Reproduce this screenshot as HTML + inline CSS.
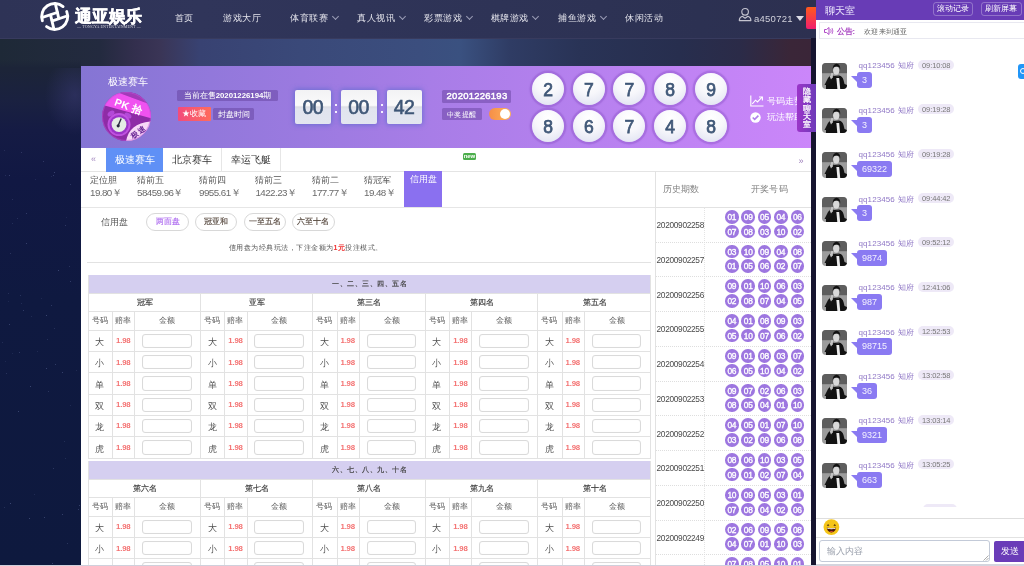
<!DOCTYPE html><html><head><meta charset="utf-8"><style>
*{box-sizing:border-box;margin:0;padding:0}
html,body{width:1024px;height:566px;overflow:hidden}
#wrap{position:absolute;left:0;top:0;width:1024px;height:566px;overflow:hidden;will-change:transform}
body{position:relative;font-family:"Liberation Sans",sans-serif;background:#0f1a45;color:#333}
.a{position:absolute}
.nw{white-space:nowrap}
#bg{left:0;top:0;width:1024px;height:566px;
 background:
  radial-gradient(ellipse 30px 40px at 75px 95px, rgba(60,60,120,.5), rgba(60,60,120,0) 100%),
  linear-gradient(180deg,#1d2536 0px,#1c2438 70px,#1a2140 100px,#151b44 130px,#111843 180px,#0f1940 300px,#0e193e 566px);}
#strip{left:0;top:38px;width:1024px;height:30px;background:linear-gradient(90deg,#1e2937 0px,#232a3f 100px,#332f4e 135px,#3a3556 160px,#384272 200px,#3a4979 300px,#3b4e7e 420px,#3a5180 460px,#2f3c64 510px,#293356 580px,#272e4e 680px,#2b2b48 740px,#3a2638 790px,#3a2538 816px)}
#strip:after{content:"";position:absolute;left:0;top:22px;width:81px;height:8px;background:linear-gradient(180deg,rgba(29,37,54,0),#1c2438)}
#nav{left:0;top:0;width:1024px;height:38.5px;background:linear-gradient(90deg,#2e3356 0px,#30355a 200px,#2e3356 500px,#2c3152 700px,#2d3050 820px);border-bottom:1px solid #383b5e}
.ni{top:12px;letter-spacing:0.5px;font-size:9.4px;color:#e4e4ec;line-height:12px}
.chev{top:13.5px;width:5px;height:5px;border-right:1px solid #9a9cb5;border-bottom:1px solid #9a9cb5;transform:rotate(45deg)}

#panel{left:81px;top:66px;width:730.5px;height:500px;background:#fff;overflow:hidden}
#hdr{left:0;top:0;width:731px;height:81.6px;background:linear-gradient(90deg,#8575d4 0%,#a87de7 48%,#cb86fa 100%)}
.lbl{background:rgba(95,60,150,.45);color:#fff;font-size:7.6px;line-height:11px;text-align:center;border-radius:1.5px}
.tbox{width:35.5px;height:33.5px;border-radius:2px;background:linear-gradient(180deg,#f2f2f4 0%,#fafafb 45%,#dcdde3 50%,#e1e4ee 56%,#e3e6f0 100%);box-shadow:0 0 5px 1px rgba(70,100,200,.55);color:#3e5676;font-size:19.5px;font-weight:normal;-webkit-text-stroke:0.6px #3e5676;line-height:34.5px;text-align:center;letter-spacing:-0.6px;text-indent:-0.6px}
.colon{color:#f4f0ff;font-size:12px;font-weight:bold;line-height:12px}
.ball{width:32px;height:32px;border-radius:50%;background:radial-gradient(circle at 50% 25%,#ffffff 0%,#f7f7fb 45%,#dcdff0 100%);box-shadow:0 0 1px 2.5px rgba(145,90,205,.5);color:#405878;font-size:17.5px;font-weight:normal;-webkit-text-stroke:0.75px #405878;line-height:34px;text-align:center}

.tab{top:82px;height:23.5px;font-size:10px;line-height:23px;text-align:center;color:#333;border-right:1px solid #e6e6e6}
.odl{top:108.6px;font-size:9px;line-height:10px;color:#555}
.odv{top:120.8px;font-size:9.8px;line-height:12px;color:#6a6a6a;letter-spacing:-0.55px}
.pill{top:147px;height:17.5px;border:1px solid #d8d8d8;border-radius:9px;font-size:8px;line-height:16.5px;text-align:center;color:#555;-webkit-text-stroke:0.15px currentColor}

.lav{background:#d5cff0;height:18.3px;font-size:7px;line-height:18.6px;text-align:center;color:#444;-webkit-text-stroke:0.2px #444;letter-spacing:0.5px;text-indent:1.5px}
.hl{height:1px;background:#e2e2e2}
.vl{width:1px;background:#e2e2e2}
.gn{font-size:8px;line-height:10px;color:#3c3c3c;text-align:center;-webkit-text-stroke:0.15px #3c3c3c}
.ch{font-size:7.5px;line-height:10px;color:#585858;text-align:center}
.dk{font-size:9px;line-height:12px;color:#505050;text-align:center}
.od{font-size:7.8px;line-height:10px;color:#f47272;font-weight:bold;text-align:center;letter-spacing:-0.2px}
.inp{width:49.5px;height:14.5px;border:1px solid #dadada;border-radius:3px;background:#fff;box-shadow:inset 0 0 1px #eee}

.hb{width:13.6px;height:13.6px;border-radius:50%;background:#9d76e0;color:#fff;font-size:8.4px;font-weight:normal;-webkit-text-stroke:0.35px #fff;line-height:15px;text-align:center;letter-spacing:-0.2px}
.pd{font-size:8.3px;line-height:10px;color:#4a4a4a;letter-spacing:-0.3px}

#stripe{left:811px;top:38px;width:5px;height:528px;background:#16142f}
#chat{left:816px;top:0;width:208px;height:566px;background:#fff;overflow:hidden}
#chdr{left:0;top:0;width:208px;height:19.7px;background:#683cb6}
.cbtn{top:2px;height:14px;border:1px solid rgba(255,255,255,.28);border-radius:3px;color:#fff;font-size:7.5px;line-height:12px;text-align:center}
.av{left:5.7px;width:25.7px;height:25.5px;border-radius:4px;overflow:hidden}
.un{left:42.5px;font-size:8px;line-height:10px;color:#9078c6;letter-spacing:0.1px}
.tm{left:102px;height:10px;border-radius:5px;background:#eee9f7;color:#777;font-size:7.5px;line-height:11px;padding:0 4px;letter-spacing:-0.1px}
.bub{left:40.7px;height:16.2px;border-radius:3px;background:#8a7af2;color:#f4f2ff;font-size:9px;line-height:16.2px;padding:0 5.3px;letter-spacing:0}
.tail{left:35.3px;width:0;height:0;border-bottom:6.5px solid transparent;border-right:6px solid #8a7af2}
</style></head><body><div id="wrap"><div id="bg" class="a"></div><div id="strip" class="a"></div><div class="a" style="left:0;top:0;width:1px;height:1px;box-shadow:26px 213px 0 0 rgba(150,165,220,0.24),6px 373px 0 0 rgba(150,165,220,0.18),5px 361px 0 0 rgba(150,165,220,0.11),35px 179px 0 0 rgba(150,165,220,0.13),34px 494px 0 0 rgba(150,165,220,0.13),18px 411px 0 0 rgba(150,165,220,0.30),46px 315px 0 0 rgba(150,165,220,0.31),4px 507px 0 0 rgba(150,165,220,0.17),12px 199px 0 0 rgba(150,165,220,0.17),65px 225px 0 0 rgba(150,165,220,0.22),51px 305px 0 0 rgba(150,165,220,0.22),5px 175px 0 0 rgba(150,165,220,0.15),54px 328px 0 0 rgba(150,165,220,0.17),47px 339px 0 0 rgba(150,165,220,0.17),64px 441px 0 0 rgba(150,165,220,0.15),46px 368px 0 0 rgba(150,165,220,0.29),58px 270px 0 0 rgba(150,165,220,0.31),9px 324px 0 0 rgba(150,165,220,0.27),12px 353px 0 0 rgba(150,165,220,0.11),53px 468px 0 0 rgba(150,165,220,0.22),70px 281px 0 0 rgba(150,165,220,0.25),48px 391px 0 0 rgba(150,165,220,0.20),67px 543px 0 0 rgba(150,165,220,0.20),53px 175px 0 0 rgba(150,165,220,0.25),52px 563px 0 0 rgba(150,165,220,0.28),23px 310px 0 0 rgba(150,165,220,0.24),2px 342px 0 0 rgba(150,165,220,0.14),9px 175px 0 0 rgba(150,165,220,0.27),10px 253px 0 0 rgba(150,165,220,0.19),70px 184px 0 0 rgba(150,165,220,0.20),44px 517px 0 0 rgba(150,165,220,0.28),69px 266px 0 0 rgba(150,165,220,0.19),29px 518px 0 0 rgba(150,165,220,0.31),12px 223px 0 0 rgba(150,165,220,0.15),19px 352px 0 0 rgba(150,165,220,0.23),21px 152px 0 0 rgba(150,165,220,0.20),30px 386px 0 0 rgba(150,165,220,0.31),55px 364px 0 0 rgba(150,165,220,0.24),54px 172px 0 0 rgba(150,165,220,0.29),62px 514px 0 0 rgba(150,165,220,0.27),31px 316px 0 0 rgba(150,165,220,0.13),51px 176px 0 0 rgba(150,165,220,0.12),17px 218px 0 0 rgba(150,165,220,0.17),4px 150px 0 0 rgba(150,165,220,0.14),8px 301px 0 0 rgba(150,165,220,0.11),70px 405px 0 0 rgba(150,165,220,0.13),20px 295px 0 0 rgba(150,165,220,0.18),10px 503px 0 0 rgba(150,165,220,0.32),37px 351px 0 0 rgba(150,165,220,0.13),8px 293px 0 0 rgba(150,165,220,0.16),66px 217px 0 0 rgba(150,165,220,0.11),76px 370px 0 0 rgba(150,165,220,0.13),43px 161px 0 0 rgba(150,165,220,0.22),78px 509px 0 0 rgba(150,165,220,0.25),21px 303px 0 0 rgba(150,165,220,0.14),62px 372px 0 0 rgba(150,165,220,0.27),26px 243px 0 0 rgba(150,165,220,0.27),79px 505px 0 0 rgba(150,165,220,0.27),65px 458px 0 0 rgba(150,165,220,0.15),41px 298px 0 0 rgba(150,165,220,0.11)"></div>
<div id="nav" class="a">
<svg class="a" style="left:38px;top:0" width="34" height="34" viewBox="38 0 34 34">
<g fill="none" stroke="#fff" stroke-width="2.9">
<path d="M42.41 20.73 A13 13 0 0 1 63.06 6.54" stroke-linecap="round"/>
<path d="M66.71 11.53 A13 13 0 0 1 46.57 26.65" stroke-linecap="round"/>
<path d="M42.5 17.4 L58.6 12"/>
<path d="M51 21.4 L67 16"/>
<path d="M50.3 13.8 L54 29.5"/>
<path d="M55.3 3.5 L59 19.3"/>
</g></svg>
<div class="a nw" style="left:75px;top:7px;font-size:17px;font-weight:bold;color:#fff;line-height:20px;letter-spacing:-0.2px;-webkit-text-stroke:0.5px #fff">通亚娱乐</div>
<div class="a nw" style="left:75px;top:25px;width:68px;height:4px;font-family:'Liberation Serif',serif;font-size:4px;line-height:4px;color:#d8d8e0;text-align:center;letter-spacing:0.15px">— TONGYA ENTERTAINMENT —</div>
<div class="a ni nw" style="left:174.5px">首页</div>
<div class="a ni nw" style="left:223.0px">游戏大厅</div>
<div class="a ni nw" style="left:290.2px">体育联赛</div>
<div class="a chev" style="left:332.7px"></div>
<div class="a ni nw" style="left:357.0px">真人视讯</div>
<div class="a chev" style="left:399.5px"></div>
<div class="a ni nw" style="left:424.1px">彩票游戏</div>
<div class="a chev" style="left:466.6px"></div>
<div class="a ni nw" style="left:490.5px">棋牌游戏</div>
<div class="a chev" style="left:533px"></div>
<div class="a ni nw" style="left:558.2px">捕鱼游戏</div>
<div class="a chev" style="left:600.7px"></div>
<div class="a ni nw" style="left:625.1px">休闲活动</div>
<svg class="a" style="left:738px;top:7px" width="14" height="15" viewBox="0 0 14 15"><g fill="none" stroke="#c4c4d0" stroke-width="1.15"><circle cx="7.1" cy="4.8" r="3.3"/><path d="M1.3 13.6 Q1.3 10.2 4.3 9.3 L7.1 11.2 L9.9 9.3 Q12.9 10.2 12.9 13.6 Z" stroke-linejoin="round"/></g></svg>
<div class="a nw" style="left:754px;top:13.2px;font-size:9.5px;letter-spacing:0.25px;line-height:11px;color:#d0d0da">a450721</div>
<div class="a" style="left:795.5px;top:16px;width:0;height:0;border-left:4.5px solid transparent;border-right:4.5px solid transparent;border-top:5px solid #dcdce6"></div>
<div class="a" style="left:806px;top:7px;width:14px;height:21.5px;border-radius:2px;background:linear-gradient(180deg,#ff5a1c,#f01e6e)"></div>
</div>
<div id="panel" class="a">
<div id="hdr" class="a">
<div class="a nw" style="left:26.8px;top:9.6px;font-size:9.5px;letter-spacing:0.2px;line-height:12px;color:#fff">极速赛车</div>
<svg class="a" style="left:21px;top:25.6px" width="49" height="49" viewBox="0 0 49 49">
<defs><clipPath id="cc"><circle cx="24.5" cy="24.5" r="24.5"/></clipPath></defs>
<g clip-path="url(#cc)">
<rect width="49" height="49" fill="#8e2ca6"/>
<polygon points="-2,-8 50,-8 50,13.1 -2,-6.2" fill="#a23ab8"/>
<polygon points="-2,-6.2 50,13.1 50,26.6 -2,12.1" fill="#f052f0"/>
<text x="12.5" y="17.8" font-family="Liberation Sans" font-weight="bold" font-size="10.5" fill="#fff" transform="rotate(20 26 13)" letter-spacing="0.3">PK 拾</text>
<ellipse cx="9" cy="21.5" rx="3.8" ry="2.4" fill="#b349d8" transform="rotate(-35 9 21.5)"/>
<ellipse cx="26" cy="23.5" rx="3.8" ry="2.4" fill="#b349d8" transform="rotate(35 26 23.5)"/>
<circle cx="17" cy="32.6" r="11.5" fill="#c052e0"/>
<circle cx="17" cy="32.6" r="9.6" fill="#9c34c8"/>
<circle cx="17" cy="32.6" r="7.4" fill="#e4ece4"/>
<path d="M19.2 26.5 L16.2 33.6" stroke="#2a2a40" stroke-width="1.4"/><circle cx="16.2" cy="33.8" r="1.6" fill="#2a2a40"/>
<path d="M22 50 L24.1 49 C26 38 34 30.5 48.3 29.4 L50 29 L50 50 Z" fill="#f7d8f7"/>
<text x="28" y="43" font-family="Liberation Sans" font-weight="bold" font-size="7.5" fill="#6d2a98" transform="rotate(-35 35.5 39.5)">极速</text>
</g>
<circle cx="24.5" cy="24.5" r="24" fill="none" stroke="#c455dc" stroke-width="1" opacity=".5"/>
</svg>
<div class="a lbl nw" style="left:96px;top:24px;width:101px;height:10.5px;line-height:12.5px;font-size:7.8px">当前在售<b>20201226194</b>期</div>
<div class="a nw" style="left:96.5px;top:41px;width:33px;height:13.5px;border-radius:1px;background:linear-gradient(90deg,#f24b7c,#ff6c5c);color:#fff;font-size:7.6px;line-height:14.5px;text-align:center">★收藏</div>
<div class="a lbl nw" style="left:132px;top:42px;width:41px;height:12px;line-height:13.5px">封盘时间</div>
<div class="a tbox" style="left:214.2px;top:24px">00</div>
<div class="a tbox" style="left:260px;top:24px">00</div>
<div class="a tbox" style="left:305.6px;top:24px">42</div>
<div class="a" style="left:254.2px;top:38.2px;width:2px;height:2.2px;background:#f4f0ff"></div>
<div class="a" style="left:254.2px;top:44.8px;width:2px;height:2.2px;background:#f4f0ff"></div>
<div class="a" style="left:300px;top:38.2px;width:2px;height:2.2px;background:#f4f0ff"></div>
<div class="a" style="left:300px;top:44.8px;width:2px;height:2.2px;background:#f4f0ff"></div>
<div class="a lbl nw" style="left:361px;top:24px;width:69px;height:12.5px;line-height:12.8px;font-size:9.5px;font-weight:normal;-webkit-text-stroke:0.45px #fff;letter-spacing:0.25px;text-indent:1px">20201226193</div>
<div class="a lbl nw" style="left:361px;top:41.8px;width:39.5px;height:12.7px;line-height:13.2px;font-size:7px;letter-spacing:0.4px">中奖提醒</div>
<div class="a" style="left:408.3px;top:42.2px;width:21.8px;height:12px;border-radius:6px;background:linear-gradient(90deg,#f58e48,#ffb45a)"><div class="a" style="right:1px;top:1px;width:10px;height:10px;border-radius:50%;background:#fff"></div></div>
<div class="a ball" style="left:451px;top:6.700000000000003px">2</div>
<div class="a ball" style="left:451px;top:43.7px">8</div>
<div class="a ball" style="left:491.9px;top:6.700000000000003px">7</div>
<div class="a ball" style="left:491.9px;top:43.7px">6</div>
<div class="a ball" style="left:532.3px;top:6.700000000000003px">7</div>
<div class="a ball" style="left:532.3px;top:43.7px">7</div>
<div class="a ball" style="left:573px;top:6.700000000000003px">8</div>
<div class="a ball" style="left:573px;top:43.7px">4</div>
<div class="a ball" style="left:614px;top:6.700000000000003px">9</div>
<div class="a ball" style="left:614px;top:43.7px">8</div>
<svg class="a" style="left:669px;top:28.5px" width="14" height="12" viewBox="0 0 14 12"><g fill="none" stroke="#fff" stroke-width="1.1"><path d="M0.8 0.5 V11 H13.5"/><path d="M2.3 8.8 L5.5 5.2 L7.5 7 L12 2.2"/><path d="M9 2 H12.4 V5.4"/></g></svg>
<div class="a nw" style="left:686.3px;top:29.8px;font-size:9px;line-height:11px;color:#fff">号码走势</div>
<svg class="a" style="left:669px;top:46px" width="11" height="11" viewBox="0 0 11 11"><circle cx="5.5" cy="5.5" r="5.2" fill="#fff"/><path d="M2.7 5.5 L4.7 7.4 L8.4 3.7" fill="none" stroke="#b080ec" stroke-width="1.7"/></svg>
<div class="a nw" style="left:686.3px;top:46.3px;font-size:9px;line-height:11px;color:#fff">玩法帮助</div>
</div>
<div class="a" style="left:0;top:82px;width:731px;height:24px;border-bottom:1px solid #e4e4e4"></div>
<div class="a" style="left:10px;top:88px;font-size:9px;line-height:10px;color:#a58ac0">«</div>
<div class="a tab nw" style="left:25px;width:57px;background:#5f90f6;color:#fff;border-right:none">极速赛车</div>
<div class="a tab nw" style="left:82px;width:59px">北京赛车</div>
<div class="a tab nw" style="left:141px;width:59px">幸运飞艇</div>
<div class="a nw" style="left:381.8px;top:87.3px;width:13.2px;height:6.8px;border-radius:1.5px;background:#4cae4c;color:#fff;font-size:6px;font-weight:bold;line-height:7px;text-align:center;letter-spacing:-0.2px">new</div>
<div class="a" style="left:717.5px;top:89.5px;font-size:9px;line-height:10px;color:#9a7ab8">»</div>
<div class="a odl nw" style="left:9px">定位胆</div>
<div class="a odv nw" style="left:9px">19.80￥</div>
<div class="a odl nw" style="left:56px">猜前五</div>
<div class="a odv nw" style="left:56px">58459.96￥</div>
<div class="a odl nw" style="left:118px">猜前四</div>
<div class="a odv nw" style="left:118px">9955.61￥</div>
<div class="a odl nw" style="left:174.4px">猜前三</div>
<div class="a odv nw" style="left:174.4px">1422.23￥</div>
<div class="a odl nw" style="left:231px">猜前二</div>
<div class="a odv nw" style="left:231px">177.77￥</div>
<div class="a odl nw" style="left:283px">猜冠军</div>
<div class="a odv nw" style="left:283px">19.48￥</div>
<div class="a nw" style="left:323px;top:105px;width:38px;height:35.5px;background:#8a70f0;color:#fff;font-size:9px;line-height:16px;text-align:center">信用盘</div>
<div class="a" style="left:0;top:140.5px;width:575px;height:1px;background:#e6e6e6"></div>
<div class="a nw" style="left:19.5px;top:151px;font-size:9px;line-height:10px;color:#555">信用盘</div>
<div class="a pill nw" style="left:65.4px;width:42.5px;color:#b070f0">两面盘</div>
<div class="a pill nw" style="left:113.6px;width:42.5px;color:#54463c">冠亚和</div>
<div class="a pill nw" style="left:162.5px;width:42.5px;color:#54463c">一至五名</div>
<div class="a pill nw" style="left:211px;width:42.5px;color:#54463c">六至十名</div>
<div class="a nw" style="left:147.5px;top:176.5px;font-size:7px;letter-spacing:0.5px;line-height:9px;color:#555">信用盘为经典玩法，下注金额为<b style="color:#f03030">1元</b>投注模式。</div>
<div class="a" style="left:6px;top:196px;width:563.5px;height:1px;background:#e2e2e2"></div>
<div class="a lav nw" style="left:6.7px;top:208.89999999999998px;width:563.0999999999999px">一、二、三、四、五名</div>
<div class="a vl" style="left:6.7px;top:208.89999999999998px;height:182.62px"></div>
<div class="a vl" style="left:568.8px;top:208.89999999999998px;height:182.62px"></div>
<div class="a hl" style="left:6.7px;top:227.2px;width:563.0999999999999px"></div>
<div class="a hl" style="left:6.7px;top:244.99999999999997px;width:563.0999999999999px"></div>
<div class="a hl" style="left:6.7px;top:263.9px;width:563.0999999999999px"></div>
<div class="a hl" style="left:6.7px;top:285.16999999999996px;width:563.0999999999999px"></div>
<div class="a hl" style="left:6.7px;top:306.44px;width:563.0999999999999px"></div>
<div class="a hl" style="left:6.7px;top:327.71px;width:563.0999999999999px"></div>
<div class="a hl" style="left:6.7px;top:348.97999999999996px;width:563.0999999999999px"></div>
<div class="a hl" style="left:6.7px;top:370.25px;width:563.0999999999999px"></div>
<div class="a hl" style="left:6.7px;top:391.52px;width:563.0999999999999px"></div>
<div class="a gn nw" style="left:7.7px;top:231.6px;width:112.2px">冠军</div>
<div class="a vl" style="left:31.099999999999998px;top:244.99999999999997px;height:146.52px"></div>
<div class="a vl" style="left:53.300000000000004px;top:244.99999999999997px;height:146.52px"></div>
<div class="a ch nw" style="left:6.7px;top:249.79999999999998px;width:24.4px">号码</div>
<div class="a ch nw" style="left:31.099999999999998px;top:249.79999999999998px;width:22.4px">赔率</div>
<div class="a ch nw" style="left:53.300000000000004px;top:249.79999999999998px;width:65.6px">金额</div>
<div class="a dk nw" style="left:6.7px;top:270.2px;width:24.4px">大</div>
<div class="a od nw" style="left:31.099999999999998px;top:270.4px;width:22.4px">1.98</div>
<div class="a inp" style="left:61.2px;top:267.7px"></div>
<div class="a dk nw" style="left:6.7px;top:291.46999999999997px;width:24.4px">小</div>
<div class="a od nw" style="left:31.099999999999998px;top:291.66999999999996px;width:22.4px">1.98</div>
<div class="a inp" style="left:61.2px;top:288.96999999999997px"></div>
<div class="a dk nw" style="left:6.7px;top:312.74px;width:24.4px">单</div>
<div class="a od nw" style="left:31.099999999999998px;top:312.94px;width:22.4px">1.98</div>
<div class="a inp" style="left:61.2px;top:310.24px"></div>
<div class="a dk nw" style="left:6.7px;top:334.01px;width:24.4px">双</div>
<div class="a od nw" style="left:31.099999999999998px;top:334.21px;width:22.4px">1.98</div>
<div class="a inp" style="left:61.2px;top:331.51px"></div>
<div class="a dk nw" style="left:6.7px;top:355.28px;width:24.4px">龙</div>
<div class="a od nw" style="left:31.099999999999998px;top:355.47999999999996px;width:22.4px">1.98</div>
<div class="a inp" style="left:61.2px;top:352.78px"></div>
<div class="a dk nw" style="left:6.7px;top:376.55px;width:24.4px">虎</div>
<div class="a od nw" style="left:31.099999999999998px;top:376.75px;width:22.4px">1.98</div>
<div class="a inp" style="left:61.2px;top:374.05px"></div>
<div class="a vl" style="left:118.9px;top:227.2px;height:164.32px"></div>
<div class="a gn nw" style="left:119.9px;top:231.6px;width:112.19999999999999px">亚军</div>
<div class="a vl" style="left:143.3px;top:244.99999999999997px;height:146.52px"></div>
<div class="a vl" style="left:165.5px;top:244.99999999999997px;height:146.52px"></div>
<div class="a ch nw" style="left:118.9px;top:249.79999999999998px;width:24.4px">号码</div>
<div class="a ch nw" style="left:143.3px;top:249.79999999999998px;width:22.4px">赔率</div>
<div class="a ch nw" style="left:165.5px;top:249.79999999999998px;width:65.6px">金额</div>
<div class="a dk nw" style="left:118.9px;top:270.2px;width:24.4px">大</div>
<div class="a od nw" style="left:143.3px;top:270.4px;width:22.4px">1.98</div>
<div class="a inp" style="left:173.4px;top:267.7px"></div>
<div class="a dk nw" style="left:118.9px;top:291.46999999999997px;width:24.4px">小</div>
<div class="a od nw" style="left:143.3px;top:291.66999999999996px;width:22.4px">1.98</div>
<div class="a inp" style="left:173.4px;top:288.96999999999997px"></div>
<div class="a dk nw" style="left:118.9px;top:312.74px;width:24.4px">单</div>
<div class="a od nw" style="left:143.3px;top:312.94px;width:22.4px">1.98</div>
<div class="a inp" style="left:173.4px;top:310.24px"></div>
<div class="a dk nw" style="left:118.9px;top:334.01px;width:24.4px">双</div>
<div class="a od nw" style="left:143.3px;top:334.21px;width:22.4px">1.98</div>
<div class="a inp" style="left:173.4px;top:331.51px"></div>
<div class="a dk nw" style="left:118.9px;top:355.28px;width:24.4px">龙</div>
<div class="a od nw" style="left:143.3px;top:355.47999999999996px;width:22.4px">1.98</div>
<div class="a inp" style="left:173.4px;top:352.78px"></div>
<div class="a dk nw" style="left:118.9px;top:376.55px;width:24.4px">虎</div>
<div class="a od nw" style="left:143.3px;top:376.75px;width:22.4px">1.98</div>
<div class="a inp" style="left:173.4px;top:374.05px"></div>
<div class="a vl" style="left:231.1px;top:227.2px;height:164.32px"></div>
<div class="a gn nw" style="left:232.1px;top:231.6px;width:112.70000000000002px">第三名</div>
<div class="a vl" style="left:255.5px;top:244.99999999999997px;height:146.52px"></div>
<div class="a vl" style="left:277.7px;top:244.99999999999997px;height:146.52px"></div>
<div class="a ch nw" style="left:231.1px;top:249.79999999999998px;width:24.4px">号码</div>
<div class="a ch nw" style="left:255.5px;top:249.79999999999998px;width:22.4px">赔率</div>
<div class="a ch nw" style="left:277.7px;top:249.79999999999998px;width:66.10000000000002px">金额</div>
<div class="a dk nw" style="left:231.1px;top:270.2px;width:24.4px">大</div>
<div class="a od nw" style="left:255.5px;top:270.4px;width:22.4px">1.98</div>
<div class="a inp" style="left:285.6px;top:267.7px"></div>
<div class="a dk nw" style="left:231.1px;top:291.46999999999997px;width:24.4px">小</div>
<div class="a od nw" style="left:255.5px;top:291.66999999999996px;width:22.4px">1.98</div>
<div class="a inp" style="left:285.6px;top:288.96999999999997px"></div>
<div class="a dk nw" style="left:231.1px;top:312.74px;width:24.4px">单</div>
<div class="a od nw" style="left:255.5px;top:312.94px;width:22.4px">1.98</div>
<div class="a inp" style="left:285.6px;top:310.24px"></div>
<div class="a dk nw" style="left:231.1px;top:334.01px;width:24.4px">双</div>
<div class="a od nw" style="left:255.5px;top:334.21px;width:22.4px">1.98</div>
<div class="a inp" style="left:285.6px;top:331.51px"></div>
<div class="a dk nw" style="left:231.1px;top:355.28px;width:24.4px">龙</div>
<div class="a od nw" style="left:255.5px;top:355.47999999999996px;width:22.4px">1.98</div>
<div class="a inp" style="left:285.6px;top:352.78px"></div>
<div class="a dk nw" style="left:231.1px;top:376.55px;width:24.4px">虎</div>
<div class="a od nw" style="left:255.5px;top:376.75px;width:22.4px">1.98</div>
<div class="a inp" style="left:285.6px;top:374.05px"></div>
<div class="a vl" style="left:343.8px;top:227.2px;height:164.32px"></div>
<div class="a gn nw" style="left:344.8px;top:231.6px;width:112.39999999999998px">第四名</div>
<div class="a vl" style="left:368.2px;top:244.99999999999997px;height:146.52px"></div>
<div class="a vl" style="left:390.40000000000003px;top:244.99999999999997px;height:146.52px"></div>
<div class="a ch nw" style="left:343.8px;top:249.79999999999998px;width:24.4px">号码</div>
<div class="a ch nw" style="left:368.2px;top:249.79999999999998px;width:22.4px">赔率</div>
<div class="a ch nw" style="left:390.40000000000003px;top:249.79999999999998px;width:65.79999999999998px">金额</div>
<div class="a dk nw" style="left:343.8px;top:270.2px;width:24.4px">大</div>
<div class="a od nw" style="left:368.2px;top:270.4px;width:22.4px">1.98</div>
<div class="a inp" style="left:398.3px;top:267.7px"></div>
<div class="a dk nw" style="left:343.8px;top:291.46999999999997px;width:24.4px">小</div>
<div class="a od nw" style="left:368.2px;top:291.66999999999996px;width:22.4px">1.98</div>
<div class="a inp" style="left:398.3px;top:288.96999999999997px"></div>
<div class="a dk nw" style="left:343.8px;top:312.74px;width:24.4px">单</div>
<div class="a od nw" style="left:368.2px;top:312.94px;width:22.4px">1.98</div>
<div class="a inp" style="left:398.3px;top:310.24px"></div>
<div class="a dk nw" style="left:343.8px;top:334.01px;width:24.4px">双</div>
<div class="a od nw" style="left:368.2px;top:334.21px;width:22.4px">1.98</div>
<div class="a inp" style="left:398.3px;top:331.51px"></div>
<div class="a dk nw" style="left:343.8px;top:355.28px;width:24.4px">龙</div>
<div class="a od nw" style="left:368.2px;top:355.47999999999996px;width:22.4px">1.98</div>
<div class="a inp" style="left:398.3px;top:352.78px"></div>
<div class="a dk nw" style="left:343.8px;top:376.55px;width:24.4px">虎</div>
<div class="a od nw" style="left:368.2px;top:376.75px;width:22.4px">1.98</div>
<div class="a inp" style="left:398.3px;top:374.05px"></div>
<div class="a vl" style="left:456.2px;top:227.2px;height:164.32px"></div>
<div class="a gn nw" style="left:457.2px;top:231.6px;width:113.59999999999997px">第五名</div>
<div class="a vl" style="left:480.59999999999997px;top:244.99999999999997px;height:146.52px"></div>
<div class="a vl" style="left:502.8px;top:244.99999999999997px;height:146.52px"></div>
<div class="a ch nw" style="left:456.2px;top:249.79999999999998px;width:24.4px">号码</div>
<div class="a ch nw" style="left:480.59999999999997px;top:249.79999999999998px;width:22.4px">赔率</div>
<div class="a ch nw" style="left:502.8px;top:249.79999999999998px;width:66.99999999999997px">金额</div>
<div class="a dk nw" style="left:456.2px;top:270.2px;width:24.4px">大</div>
<div class="a od nw" style="left:480.59999999999997px;top:270.4px;width:22.4px">1.98</div>
<div class="a inp" style="left:510.7px;top:267.7px"></div>
<div class="a dk nw" style="left:456.2px;top:291.46999999999997px;width:24.4px">小</div>
<div class="a od nw" style="left:480.59999999999997px;top:291.66999999999996px;width:22.4px">1.98</div>
<div class="a inp" style="left:510.7px;top:288.96999999999997px"></div>
<div class="a dk nw" style="left:456.2px;top:312.74px;width:24.4px">单</div>
<div class="a od nw" style="left:480.59999999999997px;top:312.94px;width:22.4px">1.98</div>
<div class="a inp" style="left:510.7px;top:310.24px"></div>
<div class="a dk nw" style="left:456.2px;top:334.01px;width:24.4px">双</div>
<div class="a od nw" style="left:480.59999999999997px;top:334.21px;width:22.4px">1.98</div>
<div class="a inp" style="left:510.7px;top:331.51px"></div>
<div class="a dk nw" style="left:456.2px;top:355.28px;width:24.4px">龙</div>
<div class="a od nw" style="left:480.59999999999997px;top:355.47999999999996px;width:22.4px">1.98</div>
<div class="a inp" style="left:510.7px;top:352.78px"></div>
<div class="a dk nw" style="left:456.2px;top:376.55px;width:24.4px">虎</div>
<div class="a od nw" style="left:480.59999999999997px;top:376.75px;width:22.4px">1.98</div>
<div class="a inp" style="left:510.7px;top:374.05px"></div>
<div class="a lav nw" style="left:6.7px;top:394.8px;width:563.0999999999999px">六、七、八、九、十名</div>
<div class="a vl" style="left:6.7px;top:394.8px;height:182.62000000000006px"></div>
<div class="a vl" style="left:568.8px;top:394.8px;height:182.62000000000006px"></div>
<div class="a hl" style="left:6.7px;top:413.1px;width:563.0999999999999px"></div>
<div class="a hl" style="left:6.7px;top:430.90000000000003px;width:563.0999999999999px"></div>
<div class="a hl" style="left:6.7px;top:449.8px;width:563.0999999999999px"></div>
<div class="a hl" style="left:6.7px;top:471.07px;width:563.0999999999999px"></div>
<div class="a hl" style="left:6.7px;top:492.34000000000003px;width:563.0999999999999px"></div>
<div class="a hl" style="left:6.7px;top:513.61px;width:563.0999999999999px"></div>
<div class="a hl" style="left:6.7px;top:534.88px;width:563.0999999999999px"></div>
<div class="a hl" style="left:6.7px;top:556.15px;width:563.0999999999999px"></div>
<div class="a hl" style="left:6.7px;top:577.4200000000001px;width:563.0999999999999px"></div>
<div class="a gn nw" style="left:7.7px;top:417.5px;width:112.2px">第六名</div>
<div class="a vl" style="left:31.099999999999998px;top:430.90000000000003px;height:146.52000000000004px"></div>
<div class="a vl" style="left:53.300000000000004px;top:430.90000000000003px;height:146.52000000000004px"></div>
<div class="a ch nw" style="left:6.7px;top:435.70000000000005px;width:24.4px">号码</div>
<div class="a ch nw" style="left:31.099999999999998px;top:435.70000000000005px;width:22.4px">赔率</div>
<div class="a ch nw" style="left:53.300000000000004px;top:435.70000000000005px;width:65.6px">金额</div>
<div class="a dk nw" style="left:6.7px;top:456.1px;width:24.4px">大</div>
<div class="a od nw" style="left:31.099999999999998px;top:456.3px;width:22.4px">1.98</div>
<div class="a inp" style="left:61.2px;top:453.6px"></div>
<div class="a dk nw" style="left:6.7px;top:477.37px;width:24.4px">小</div>
<div class="a od nw" style="left:31.099999999999998px;top:477.57px;width:22.4px">1.98</div>
<div class="a inp" style="left:61.2px;top:474.87px"></div>
<div class="a dk nw" style="left:6.7px;top:498.64000000000004px;width:24.4px">单</div>
<div class="a od nw" style="left:31.099999999999998px;top:498.84000000000003px;width:22.4px">1.98</div>
<div class="a inp" style="left:61.2px;top:496.14000000000004px"></div>
<div class="a dk nw" style="left:6.7px;top:519.91px;width:24.4px">双</div>
<div class="a od nw" style="left:31.099999999999998px;top:520.11px;width:22.4px">1.98</div>
<div class="a inp" style="left:61.2px;top:517.41px"></div>
<div class="a dk nw" style="left:6.7px;top:541.18px;width:24.4px">龙</div>
<div class="a od nw" style="left:31.099999999999998px;top:541.38px;width:22.4px">1.98</div>
<div class="a inp" style="left:61.2px;top:538.68px"></div>
<div class="a dk nw" style="left:6.7px;top:562.4499999999999px;width:24.4px">虎</div>
<div class="a od nw" style="left:31.099999999999998px;top:562.65px;width:22.4px">1.98</div>
<div class="a inp" style="left:61.2px;top:559.9499999999999px"></div>
<div class="a vl" style="left:118.9px;top:413.1px;height:164.32000000000005px"></div>
<div class="a gn nw" style="left:119.9px;top:417.5px;width:112.19999999999999px">第七名</div>
<div class="a vl" style="left:143.3px;top:430.90000000000003px;height:146.52000000000004px"></div>
<div class="a vl" style="left:165.5px;top:430.90000000000003px;height:146.52000000000004px"></div>
<div class="a ch nw" style="left:118.9px;top:435.70000000000005px;width:24.4px">号码</div>
<div class="a ch nw" style="left:143.3px;top:435.70000000000005px;width:22.4px">赔率</div>
<div class="a ch nw" style="left:165.5px;top:435.70000000000005px;width:65.6px">金额</div>
<div class="a dk nw" style="left:118.9px;top:456.1px;width:24.4px">大</div>
<div class="a od nw" style="left:143.3px;top:456.3px;width:22.4px">1.98</div>
<div class="a inp" style="left:173.4px;top:453.6px"></div>
<div class="a dk nw" style="left:118.9px;top:477.37px;width:24.4px">小</div>
<div class="a od nw" style="left:143.3px;top:477.57px;width:22.4px">1.98</div>
<div class="a inp" style="left:173.4px;top:474.87px"></div>
<div class="a dk nw" style="left:118.9px;top:498.64000000000004px;width:24.4px">单</div>
<div class="a od nw" style="left:143.3px;top:498.84000000000003px;width:22.4px">1.98</div>
<div class="a inp" style="left:173.4px;top:496.14000000000004px"></div>
<div class="a dk nw" style="left:118.9px;top:519.91px;width:24.4px">双</div>
<div class="a od nw" style="left:143.3px;top:520.11px;width:22.4px">1.98</div>
<div class="a inp" style="left:173.4px;top:517.41px"></div>
<div class="a dk nw" style="left:118.9px;top:541.18px;width:24.4px">龙</div>
<div class="a od nw" style="left:143.3px;top:541.38px;width:22.4px">1.98</div>
<div class="a inp" style="left:173.4px;top:538.68px"></div>
<div class="a dk nw" style="left:118.9px;top:562.4499999999999px;width:24.4px">虎</div>
<div class="a od nw" style="left:143.3px;top:562.65px;width:22.4px">1.98</div>
<div class="a inp" style="left:173.4px;top:559.9499999999999px"></div>
<div class="a vl" style="left:231.1px;top:413.1px;height:164.32000000000005px"></div>
<div class="a gn nw" style="left:232.1px;top:417.5px;width:112.70000000000002px">第八名</div>
<div class="a vl" style="left:255.5px;top:430.90000000000003px;height:146.52000000000004px"></div>
<div class="a vl" style="left:277.7px;top:430.90000000000003px;height:146.52000000000004px"></div>
<div class="a ch nw" style="left:231.1px;top:435.70000000000005px;width:24.4px">号码</div>
<div class="a ch nw" style="left:255.5px;top:435.70000000000005px;width:22.4px">赔率</div>
<div class="a ch nw" style="left:277.7px;top:435.70000000000005px;width:66.10000000000002px">金额</div>
<div class="a dk nw" style="left:231.1px;top:456.1px;width:24.4px">大</div>
<div class="a od nw" style="left:255.5px;top:456.3px;width:22.4px">1.98</div>
<div class="a inp" style="left:285.6px;top:453.6px"></div>
<div class="a dk nw" style="left:231.1px;top:477.37px;width:24.4px">小</div>
<div class="a od nw" style="left:255.5px;top:477.57px;width:22.4px">1.98</div>
<div class="a inp" style="left:285.6px;top:474.87px"></div>
<div class="a dk nw" style="left:231.1px;top:498.64000000000004px;width:24.4px">单</div>
<div class="a od nw" style="left:255.5px;top:498.84000000000003px;width:22.4px">1.98</div>
<div class="a inp" style="left:285.6px;top:496.14000000000004px"></div>
<div class="a dk nw" style="left:231.1px;top:519.91px;width:24.4px">双</div>
<div class="a od nw" style="left:255.5px;top:520.11px;width:22.4px">1.98</div>
<div class="a inp" style="left:285.6px;top:517.41px"></div>
<div class="a dk nw" style="left:231.1px;top:541.18px;width:24.4px">龙</div>
<div class="a od nw" style="left:255.5px;top:541.38px;width:22.4px">1.98</div>
<div class="a inp" style="left:285.6px;top:538.68px"></div>
<div class="a dk nw" style="left:231.1px;top:562.4499999999999px;width:24.4px">虎</div>
<div class="a od nw" style="left:255.5px;top:562.65px;width:22.4px">1.98</div>
<div class="a inp" style="left:285.6px;top:559.9499999999999px"></div>
<div class="a vl" style="left:343.8px;top:413.1px;height:164.32000000000005px"></div>
<div class="a gn nw" style="left:344.8px;top:417.5px;width:112.39999999999998px">第九名</div>
<div class="a vl" style="left:368.2px;top:430.90000000000003px;height:146.52000000000004px"></div>
<div class="a vl" style="left:390.40000000000003px;top:430.90000000000003px;height:146.52000000000004px"></div>
<div class="a ch nw" style="left:343.8px;top:435.70000000000005px;width:24.4px">号码</div>
<div class="a ch nw" style="left:368.2px;top:435.70000000000005px;width:22.4px">赔率</div>
<div class="a ch nw" style="left:390.40000000000003px;top:435.70000000000005px;width:65.79999999999998px">金额</div>
<div class="a dk nw" style="left:343.8px;top:456.1px;width:24.4px">大</div>
<div class="a od nw" style="left:368.2px;top:456.3px;width:22.4px">1.98</div>
<div class="a inp" style="left:398.3px;top:453.6px"></div>
<div class="a dk nw" style="left:343.8px;top:477.37px;width:24.4px">小</div>
<div class="a od nw" style="left:368.2px;top:477.57px;width:22.4px">1.98</div>
<div class="a inp" style="left:398.3px;top:474.87px"></div>
<div class="a dk nw" style="left:343.8px;top:498.64000000000004px;width:24.4px">单</div>
<div class="a od nw" style="left:368.2px;top:498.84000000000003px;width:22.4px">1.98</div>
<div class="a inp" style="left:398.3px;top:496.14000000000004px"></div>
<div class="a dk nw" style="left:343.8px;top:519.91px;width:24.4px">双</div>
<div class="a od nw" style="left:368.2px;top:520.11px;width:22.4px">1.98</div>
<div class="a inp" style="left:398.3px;top:517.41px"></div>
<div class="a dk nw" style="left:343.8px;top:541.18px;width:24.4px">龙</div>
<div class="a od nw" style="left:368.2px;top:541.38px;width:22.4px">1.98</div>
<div class="a inp" style="left:398.3px;top:538.68px"></div>
<div class="a dk nw" style="left:343.8px;top:562.4499999999999px;width:24.4px">虎</div>
<div class="a od nw" style="left:368.2px;top:562.65px;width:22.4px">1.98</div>
<div class="a inp" style="left:398.3px;top:559.9499999999999px"></div>
<div class="a vl" style="left:456.2px;top:413.1px;height:164.32000000000005px"></div>
<div class="a gn nw" style="left:457.2px;top:417.5px;width:113.59999999999997px">第十名</div>
<div class="a vl" style="left:480.59999999999997px;top:430.90000000000003px;height:146.52000000000004px"></div>
<div class="a vl" style="left:502.8px;top:430.90000000000003px;height:146.52000000000004px"></div>
<div class="a ch nw" style="left:456.2px;top:435.70000000000005px;width:24.4px">号码</div>
<div class="a ch nw" style="left:480.59999999999997px;top:435.70000000000005px;width:22.4px">赔率</div>
<div class="a ch nw" style="left:502.8px;top:435.70000000000005px;width:66.99999999999997px">金额</div>
<div class="a dk nw" style="left:456.2px;top:456.1px;width:24.4px">大</div>
<div class="a od nw" style="left:480.59999999999997px;top:456.3px;width:22.4px">1.98</div>
<div class="a inp" style="left:510.7px;top:453.6px"></div>
<div class="a dk nw" style="left:456.2px;top:477.37px;width:24.4px">小</div>
<div class="a od nw" style="left:480.59999999999997px;top:477.57px;width:22.4px">1.98</div>
<div class="a inp" style="left:510.7px;top:474.87px"></div>
<div class="a dk nw" style="left:456.2px;top:498.64000000000004px;width:24.4px">单</div>
<div class="a od nw" style="left:480.59999999999997px;top:498.84000000000003px;width:22.4px">1.98</div>
<div class="a inp" style="left:510.7px;top:496.14000000000004px"></div>
<div class="a dk nw" style="left:456.2px;top:519.91px;width:24.4px">双</div>
<div class="a od nw" style="left:480.59999999999997px;top:520.11px;width:22.4px">1.98</div>
<div class="a inp" style="left:510.7px;top:517.41px"></div>
<div class="a dk nw" style="left:456.2px;top:541.18px;width:24.4px">龙</div>
<div class="a od nw" style="left:480.59999999999997px;top:541.38px;width:22.4px">1.98</div>
<div class="a inp" style="left:510.7px;top:538.68px"></div>
<div class="a dk nw" style="left:456.2px;top:562.4499999999999px;width:24.4px">虎</div>
<div class="a od nw" style="left:480.59999999999997px;top:562.65px;width:22.4px">1.98</div>
<div class="a inp" style="left:510.7px;top:559.9499999999999px"></div>
<div class="a vl" style="left:574px;top:105px;height:400px"></div>
<div class="a hl" style="left:574px;top:140.5px;width:160px"></div>
<div class="a nw" style="left:581.5px;top:118.3px;font-size:8.5px;letter-spacing:0.3px;line-height:10px;color:#808080">历史期数</div>
<div class="a nw" style="left:669.7px;top:118.3px;font-size:8.5px;letter-spacing:0.3px;line-height:10px;color:#808080">开奖号码</div>
<div class="a" style="left:622.6px;top:141px;width:0;height:400px;border-left:1px dotted #e4e4e4"></div>
<div class="a pd nw" style="left:575.5px;top:154.0px">20200902258</div>
<div class="a hb" style="left:644.05px;top:143.95px">01</div>
<div class="a hb" style="left:644.05px;top:158.55px">07</div>
<div class="a hb" style="left:660.35px;top:143.95px">09</div>
<div class="a hb" style="left:660.35px;top:158.55px">08</div>
<div class="a hb" style="left:676.65px;top:143.95px">05</div>
<div class="a hb" style="left:676.65px;top:158.55px">03</div>
<div class="a hb" style="left:693.05px;top:143.95px">04</div>
<div class="a hb" style="left:693.05px;top:158.55px">10</div>
<div class="a hb" style="left:709.55px;top:143.95px">06</div>
<div class="a hb" style="left:709.55px;top:158.55px">02</div>
<div class="a" style="left:575px;top:175.5px;width:161px;height:0;border-top:1px dotted #dedede"></div>
<div class="a pd nw" style="left:575.5px;top:188.75px">20200902257</div>
<div class="a hb" style="left:644.05px;top:178.7px">03</div>
<div class="a hb" style="left:644.05px;top:193.3px">01</div>
<div class="a hb" style="left:660.35px;top:178.7px">10</div>
<div class="a hb" style="left:660.35px;top:193.3px">05</div>
<div class="a hb" style="left:676.65px;top:178.7px">09</div>
<div class="a hb" style="left:676.65px;top:193.3px">06</div>
<div class="a hb" style="left:693.05px;top:178.7px">04</div>
<div class="a hb" style="left:693.05px;top:193.3px">02</div>
<div class="a hb" style="left:709.55px;top:178.7px">08</div>
<div class="a hb" style="left:709.55px;top:193.3px">07</div>
<div class="a" style="left:575px;top:210.25px;width:161px;height:0;border-top:1px dotted #dedede"></div>
<div class="a pd nw" style="left:575.5px;top:223.5px">20200902256</div>
<div class="a hb" style="left:644.05px;top:213.45px">09</div>
<div class="a hb" style="left:644.05px;top:228.05px">02</div>
<div class="a hb" style="left:660.35px;top:213.45px">01</div>
<div class="a hb" style="left:660.35px;top:228.05px">08</div>
<div class="a hb" style="left:676.65px;top:213.45px">10</div>
<div class="a hb" style="left:676.65px;top:228.05px">07</div>
<div class="a hb" style="left:693.05px;top:213.45px">06</div>
<div class="a hb" style="left:693.05px;top:228.05px">04</div>
<div class="a hb" style="left:709.55px;top:213.45px">03</div>
<div class="a hb" style="left:709.55px;top:228.05px">05</div>
<div class="a" style="left:575px;top:245.0px;width:161px;height:0;border-top:1px dotted #dedede"></div>
<div class="a pd nw" style="left:575.5px;top:258.25px">20200902255</div>
<div class="a hb" style="left:644.05px;top:248.2px">04</div>
<div class="a hb" style="left:644.05px;top:262.8px">05</div>
<div class="a hb" style="left:660.35px;top:248.2px">01</div>
<div class="a hb" style="left:660.35px;top:262.8px">10</div>
<div class="a hb" style="left:676.65px;top:248.2px">08</div>
<div class="a hb" style="left:676.65px;top:262.8px">07</div>
<div class="a hb" style="left:693.05px;top:248.2px">09</div>
<div class="a hb" style="left:693.05px;top:262.8px">06</div>
<div class="a hb" style="left:709.55px;top:248.2px">03</div>
<div class="a hb" style="left:709.55px;top:262.8px">02</div>
<div class="a" style="left:575px;top:279.75px;width:161px;height:0;border-top:1px dotted #dedede"></div>
<div class="a pd nw" style="left:575.5px;top:293.0px">20200902254</div>
<div class="a hb" style="left:644.05px;top:282.95px">09</div>
<div class="a hb" style="left:644.05px;top:297.55px">06</div>
<div class="a hb" style="left:660.35px;top:282.95px">01</div>
<div class="a hb" style="left:660.35px;top:297.55px">05</div>
<div class="a hb" style="left:676.65px;top:282.95px">08</div>
<div class="a hb" style="left:676.65px;top:297.55px">10</div>
<div class="a hb" style="left:693.05px;top:282.95px">03</div>
<div class="a hb" style="left:693.05px;top:297.55px">04</div>
<div class="a hb" style="left:709.55px;top:282.95px">07</div>
<div class="a hb" style="left:709.55px;top:297.55px">02</div>
<div class="a" style="left:575px;top:314.5px;width:161px;height:0;border-top:1px dotted #dedede"></div>
<div class="a pd nw" style="left:575.5px;top:327.75px">20200902253</div>
<div class="a hb" style="left:644.05px;top:317.7px">09</div>
<div class="a hb" style="left:644.05px;top:332.3px">08</div>
<div class="a hb" style="left:660.35px;top:317.7px">07</div>
<div class="a hb" style="left:660.35px;top:332.3px">05</div>
<div class="a hb" style="left:676.65px;top:317.7px">02</div>
<div class="a hb" style="left:676.65px;top:332.3px">04</div>
<div class="a hb" style="left:693.05px;top:317.7px">06</div>
<div class="a hb" style="left:693.05px;top:332.3px">01</div>
<div class="a hb" style="left:709.55px;top:317.7px">03</div>
<div class="a hb" style="left:709.55px;top:332.3px">10</div>
<div class="a" style="left:575px;top:349.25px;width:161px;height:0;border-top:1px dotted #dedede"></div>
<div class="a pd nw" style="left:575.5px;top:362.5px">20200902252</div>
<div class="a hb" style="left:644.05px;top:352.45px">04</div>
<div class="a hb" style="left:644.05px;top:367.05px">03</div>
<div class="a hb" style="left:660.35px;top:352.45px">05</div>
<div class="a hb" style="left:660.35px;top:367.05px">02</div>
<div class="a hb" style="left:676.65px;top:352.45px">01</div>
<div class="a hb" style="left:676.65px;top:367.05px">09</div>
<div class="a hb" style="left:693.05px;top:352.45px">07</div>
<div class="a hb" style="left:693.05px;top:367.05px">06</div>
<div class="a hb" style="left:709.55px;top:352.45px">10</div>
<div class="a hb" style="left:709.55px;top:367.05px">08</div>
<div class="a" style="left:575px;top:384.0px;width:161px;height:0;border-top:1px dotted #dedede"></div>
<div class="a pd nw" style="left:575.5px;top:397.25px">20200902251</div>
<div class="a hb" style="left:644.05px;top:387.2px">08</div>
<div class="a hb" style="left:644.05px;top:401.8px">09</div>
<div class="a hb" style="left:660.35px;top:387.2px">06</div>
<div class="a hb" style="left:660.35px;top:401.8px">01</div>
<div class="a hb" style="left:676.65px;top:387.2px">10</div>
<div class="a hb" style="left:676.65px;top:401.8px">02</div>
<div class="a hb" style="left:693.05px;top:387.2px">03</div>
<div class="a hb" style="left:693.05px;top:401.8px">07</div>
<div class="a hb" style="left:709.55px;top:387.2px">05</div>
<div class="a hb" style="left:709.55px;top:401.8px">04</div>
<div class="a" style="left:575px;top:418.75px;width:161px;height:0;border-top:1px dotted #dedede"></div>
<div class="a pd nw" style="left:575.5px;top:432.0px">20200902250</div>
<div class="a hb" style="left:644.05px;top:421.95px">10</div>
<div class="a hb" style="left:644.05px;top:436.55px">07</div>
<div class="a hb" style="left:660.35px;top:421.95px">09</div>
<div class="a hb" style="left:660.35px;top:436.55px">08</div>
<div class="a hb" style="left:676.65px;top:421.95px">05</div>
<div class="a hb" style="left:676.65px;top:436.55px">04</div>
<div class="a hb" style="left:693.05px;top:421.95px">03</div>
<div class="a hb" style="left:693.05px;top:436.55px">02</div>
<div class="a hb" style="left:709.55px;top:421.95px">01</div>
<div class="a hb" style="left:709.55px;top:436.55px">06</div>
<div class="a" style="left:575px;top:453.5px;width:161px;height:0;border-top:1px dotted #dedede"></div>
<div class="a pd nw" style="left:575.5px;top:466.75px">20200902249</div>
<div class="a hb" style="left:644.05px;top:456.70000000000005px">02</div>
<div class="a hb" style="left:644.05px;top:471.29999999999995px">04</div>
<div class="a hb" style="left:660.35px;top:456.70000000000005px">06</div>
<div class="a hb" style="left:660.35px;top:471.29999999999995px">07</div>
<div class="a hb" style="left:676.65px;top:456.70000000000005px">09</div>
<div class="a hb" style="left:676.65px;top:471.29999999999995px">01</div>
<div class="a hb" style="left:693.05px;top:456.70000000000005px">05</div>
<div class="a hb" style="left:693.05px;top:471.29999999999995px">10</div>
<div class="a hb" style="left:709.55px;top:456.70000000000005px">08</div>
<div class="a hb" style="left:709.55px;top:471.29999999999995px">03</div>
<div class="a" style="left:575px;top:488.25px;width:161px;height:0;border-top:1px dotted #dedede"></div>
<div class="a pd nw" style="left:575.5px;top:501.5px">20200902248</div>
<div class="a hb" style="left:644.05px;top:491.45000000000005px">07</div>
<div class="a hb" style="left:644.05px;top:506.04999999999995px">03</div>
<div class="a hb" style="left:660.35px;top:491.45000000000005px">08</div>
<div class="a hb" style="left:660.35px;top:506.04999999999995px">06</div>
<div class="a hb" style="left:676.65px;top:491.45000000000005px">05</div>
<div class="a hb" style="left:676.65px;top:506.04999999999995px">09</div>
<div class="a hb" style="left:693.05px;top:491.45000000000005px">10</div>
<div class="a hb" style="left:693.05px;top:506.04999999999995px">02</div>
<div class="a hb" style="left:709.55px;top:491.45000000000005px">01</div>
<div class="a hb" style="left:709.55px;top:506.04999999999995px">04</div>
<div class="a" style="left:575px;top:523.0px;width:161px;height:0;border-top:1px dotted #dedede"></div>
</div>
<div id="stripe" class="a"></div>
<div class="a" style="left:797px;top:83.8px;width:19px;height:47.8px;border-radius:3px 0 0 3px;background:linear-gradient(90deg,#9b35c9,#6d3bb8);color:#fff;font-size:8px;line-height:8.1px;text-align:center;padding-top:4.6px;padding-left:1px;-webkit-text-stroke:0.25px #fff">隐<br>藏<br>聊<br>天<br>室</div>
<div id="chat" class="a">
<div id="chdr" class="a"><div class="a nw" style="left:8.5px;top:4.5px;font-size:9.5px;line-height:12px;color:#f0ecff">聊天室</div>
<div class="a cbtn nw" style="left:116.8px;width:40px">滚动记录</div>
<div class="a cbtn nw" style="left:165px;width:40.6px">刷新屏幕</div></div>
<div class="a" style="left:2.5px;top:22.2px;width:210px;height:17px;border:1px solid #e8e8f0"></div>
<svg class="a" style="left:8px;top:27px" width="10" height="8" viewBox="0 0 10 8"><path d="M0.5 2.5 H2.5 L5 0.5 V7.5 L2.5 5.5 H0.5 Z" fill="none" stroke="#b04ac8" stroke-width="1"/><path d="M6.6 2.2 Q7.8 4 6.6 5.8 M8 1 Q9.8 4 8 7" fill="none" stroke="#b04ac8" stroke-width="0.8"/></svg>
<div class="a nw" style="left:20.6px;top:26.5px;font-size:7.5px;line-height:10px;color:#a844c2;font-weight:bold">公告:</div>
<div class="a nw" style="left:48px;top:26.5px;font-size:7px;letter-spacing:0.3px;line-height:10px;color:#666">欢迎来到通亚</div>
<div class="a av" style="top:63.4px"><svg width="26" height="26" viewBox="0 0 26 26"><rect width="26" height="26" fill="#9c9c9c"/><rect width="26" height="10.2" fill="#5e5e5e"/><path d="M4 26 L4 21 Q5 17 8.5 16 L11.5 13 L17 12.5 Q20.5 13 21.5 17 L22.5 21 L26 22.5 L26 26 Z" fill="#121212"/><path d="M2.5 22 L6 15 L9 11.5 L11.5 12.5 L10.5 17.5 L6.5 22 Z" fill="#161616"/><path d="M7.8 13.5 L9.6 9.8 L11.2 10.3 L10.8 14.2 L9 16.5 Z" fill="#c4c4c4"/><ellipse cx="14.2" cy="7.6" rx="3.1" ry="4.2" fill="#d8d8d8"/><path d="M10.6 6.5 Q10.8 1 14.6 0.8 Q18.6 1.2 18.2 6.5 L17.3 4.2 Q14.2 2.6 11.6 4.6 Z" fill="#111"/><path d="M14.2 13.6 L17 13.2 L18.2 26 L15.4 26 Z" fill="#ededed"/><rect x="14" y="13.2" width="4.2" height="1.8" fill="#111"/></svg></div>
<div class="a un nw" style="top:61.4px">qq123456<span style="letter-spacing:0;margin-left:3.5px">知府</span></div>
<div class="a tm nw" style="top:59.8px">09:10:08</div>
<div class="a tail" style="top:76.0px"></div>
<div class="a bub nw" style="top:72.2px">3</div>
<div class="a av" style="top:107.77px"><svg width="26" height="26" viewBox="0 0 26 26"><rect width="26" height="26" fill="#9c9c9c"/><rect width="26" height="10.2" fill="#5e5e5e"/><path d="M4 26 L4 21 Q5 17 8.5 16 L11.5 13 L17 12.5 Q20.5 13 21.5 17 L22.5 21 L26 22.5 L26 26 Z" fill="#121212"/><path d="M2.5 22 L6 15 L9 11.5 L11.5 12.5 L10.5 17.5 L6.5 22 Z" fill="#161616"/><path d="M7.8 13.5 L9.6 9.8 L11.2 10.3 L10.8 14.2 L9 16.5 Z" fill="#c4c4c4"/><ellipse cx="14.2" cy="7.6" rx="3.1" ry="4.2" fill="#d8d8d8"/><path d="M10.6 6.5 Q10.8 1 14.6 0.8 Q18.6 1.2 18.2 6.5 L17.3 4.2 Q14.2 2.6 11.6 4.6 Z" fill="#111"/><path d="M14.2 13.6 L17 13.2 L18.2 26 L15.4 26 Z" fill="#ededed"/><rect x="14" y="13.2" width="4.2" height="1.8" fill="#111"/></svg></div>
<div class="a un nw" style="top:105.77px">qq123456<span style="letter-spacing:0;margin-left:3.5px">知府</span></div>
<div class="a tm nw" style="top:104.17px">09:19:28</div>
<div class="a tail" style="top:120.36999999999999px"></div>
<div class="a bub nw" style="top:116.57px">3</div>
<div class="a av" style="top:152.14px"><svg width="26" height="26" viewBox="0 0 26 26"><rect width="26" height="26" fill="#9c9c9c"/><rect width="26" height="10.2" fill="#5e5e5e"/><path d="M4 26 L4 21 Q5 17 8.5 16 L11.5 13 L17 12.5 Q20.5 13 21.5 17 L22.5 21 L26 22.5 L26 26 Z" fill="#121212"/><path d="M2.5 22 L6 15 L9 11.5 L11.5 12.5 L10.5 17.5 L6.5 22 Z" fill="#161616"/><path d="M7.8 13.5 L9.6 9.8 L11.2 10.3 L10.8 14.2 L9 16.5 Z" fill="#c4c4c4"/><ellipse cx="14.2" cy="7.6" rx="3.1" ry="4.2" fill="#d8d8d8"/><path d="M10.6 6.5 Q10.8 1 14.6 0.8 Q18.6 1.2 18.2 6.5 L17.3 4.2 Q14.2 2.6 11.6 4.6 Z" fill="#111"/><path d="M14.2 13.6 L17 13.2 L18.2 26 L15.4 26 Z" fill="#ededed"/><rect x="14" y="13.2" width="4.2" height="1.8" fill="#111"/></svg></div>
<div class="a un nw" style="top:150.14px">qq123456<span style="letter-spacing:0;margin-left:3.5px">知府</span></div>
<div class="a tm nw" style="top:148.54px">09:19:28</div>
<div class="a tail" style="top:164.73999999999998px"></div>
<div class="a bub nw" style="top:160.94px">69322</div>
<div class="a av" style="top:196.51px"><svg width="26" height="26" viewBox="0 0 26 26"><rect width="26" height="26" fill="#9c9c9c"/><rect width="26" height="10.2" fill="#5e5e5e"/><path d="M4 26 L4 21 Q5 17 8.5 16 L11.5 13 L17 12.5 Q20.5 13 21.5 17 L22.5 21 L26 22.5 L26 26 Z" fill="#121212"/><path d="M2.5 22 L6 15 L9 11.5 L11.5 12.5 L10.5 17.5 L6.5 22 Z" fill="#161616"/><path d="M7.8 13.5 L9.6 9.8 L11.2 10.3 L10.8 14.2 L9 16.5 Z" fill="#c4c4c4"/><ellipse cx="14.2" cy="7.6" rx="3.1" ry="4.2" fill="#d8d8d8"/><path d="M10.6 6.5 Q10.8 1 14.6 0.8 Q18.6 1.2 18.2 6.5 L17.3 4.2 Q14.2 2.6 11.6 4.6 Z" fill="#111"/><path d="M14.2 13.6 L17 13.2 L18.2 26 L15.4 26 Z" fill="#ededed"/><rect x="14" y="13.2" width="4.2" height="1.8" fill="#111"/></svg></div>
<div class="a un nw" style="top:194.51px">qq123456<span style="letter-spacing:0;margin-left:3.5px">知府</span></div>
<div class="a tm nw" style="top:192.91px">09:44:42</div>
<div class="a tail" style="top:209.10999999999999px"></div>
<div class="a bub nw" style="top:205.31px">3</div>
<div class="a av" style="top:240.88px"><svg width="26" height="26" viewBox="0 0 26 26"><rect width="26" height="26" fill="#9c9c9c"/><rect width="26" height="10.2" fill="#5e5e5e"/><path d="M4 26 L4 21 Q5 17 8.5 16 L11.5 13 L17 12.5 Q20.5 13 21.5 17 L22.5 21 L26 22.5 L26 26 Z" fill="#121212"/><path d="M2.5 22 L6 15 L9 11.5 L11.5 12.5 L10.5 17.5 L6.5 22 Z" fill="#161616"/><path d="M7.8 13.5 L9.6 9.8 L11.2 10.3 L10.8 14.2 L9 16.5 Z" fill="#c4c4c4"/><ellipse cx="14.2" cy="7.6" rx="3.1" ry="4.2" fill="#d8d8d8"/><path d="M10.6 6.5 Q10.8 1 14.6 0.8 Q18.6 1.2 18.2 6.5 L17.3 4.2 Q14.2 2.6 11.6 4.6 Z" fill="#111"/><path d="M14.2 13.6 L17 13.2 L18.2 26 L15.4 26 Z" fill="#ededed"/><rect x="14" y="13.2" width="4.2" height="1.8" fill="#111"/></svg></div>
<div class="a un nw" style="top:238.88px">qq123456<span style="letter-spacing:0;margin-left:3.5px">知府</span></div>
<div class="a tm nw" style="top:237.28px">09:52:12</div>
<div class="a tail" style="top:253.48px"></div>
<div class="a bub nw" style="top:249.68px">9874</div>
<div class="a av" style="top:285.25px"><svg width="26" height="26" viewBox="0 0 26 26"><rect width="26" height="26" fill="#9c9c9c"/><rect width="26" height="10.2" fill="#5e5e5e"/><path d="M4 26 L4 21 Q5 17 8.5 16 L11.5 13 L17 12.5 Q20.5 13 21.5 17 L22.5 21 L26 22.5 L26 26 Z" fill="#121212"/><path d="M2.5 22 L6 15 L9 11.5 L11.5 12.5 L10.5 17.5 L6.5 22 Z" fill="#161616"/><path d="M7.8 13.5 L9.6 9.8 L11.2 10.3 L10.8 14.2 L9 16.5 Z" fill="#c4c4c4"/><ellipse cx="14.2" cy="7.6" rx="3.1" ry="4.2" fill="#d8d8d8"/><path d="M10.6 6.5 Q10.8 1 14.6 0.8 Q18.6 1.2 18.2 6.5 L17.3 4.2 Q14.2 2.6 11.6 4.6 Z" fill="#111"/><path d="M14.2 13.6 L17 13.2 L18.2 26 L15.4 26 Z" fill="#ededed"/><rect x="14" y="13.2" width="4.2" height="1.8" fill="#111"/></svg></div>
<div class="a un nw" style="top:283.25px">qq123456<span style="letter-spacing:0;margin-left:3.5px">知府</span></div>
<div class="a tm nw" style="top:281.65px">12:41:06</div>
<div class="a tail" style="top:297.85px"></div>
<div class="a bub nw" style="top:294.05px">987</div>
<div class="a av" style="top:329.61999999999995px"><svg width="26" height="26" viewBox="0 0 26 26"><rect width="26" height="26" fill="#9c9c9c"/><rect width="26" height="10.2" fill="#5e5e5e"/><path d="M4 26 L4 21 Q5 17 8.5 16 L11.5 13 L17 12.5 Q20.5 13 21.5 17 L22.5 21 L26 22.5 L26 26 Z" fill="#121212"/><path d="M2.5 22 L6 15 L9 11.5 L11.5 12.5 L10.5 17.5 L6.5 22 Z" fill="#161616"/><path d="M7.8 13.5 L9.6 9.8 L11.2 10.3 L10.8 14.2 L9 16.5 Z" fill="#c4c4c4"/><ellipse cx="14.2" cy="7.6" rx="3.1" ry="4.2" fill="#d8d8d8"/><path d="M10.6 6.5 Q10.8 1 14.6 0.8 Q18.6 1.2 18.2 6.5 L17.3 4.2 Q14.2 2.6 11.6 4.6 Z" fill="#111"/><path d="M14.2 13.6 L17 13.2 L18.2 26 L15.4 26 Z" fill="#ededed"/><rect x="14" y="13.2" width="4.2" height="1.8" fill="#111"/></svg></div>
<div class="a un nw" style="top:327.61999999999995px">qq123456<span style="letter-spacing:0;margin-left:3.5px">知府</span></div>
<div class="a tm nw" style="top:326.0199999999999px">12:52:53</div>
<div class="a tail" style="top:342.21999999999997px"></div>
<div class="a bub nw" style="top:338.41999999999996px">98715</div>
<div class="a av" style="top:373.98999999999995px"><svg width="26" height="26" viewBox="0 0 26 26"><rect width="26" height="26" fill="#9c9c9c"/><rect width="26" height="10.2" fill="#5e5e5e"/><path d="M4 26 L4 21 Q5 17 8.5 16 L11.5 13 L17 12.5 Q20.5 13 21.5 17 L22.5 21 L26 22.5 L26 26 Z" fill="#121212"/><path d="M2.5 22 L6 15 L9 11.5 L11.5 12.5 L10.5 17.5 L6.5 22 Z" fill="#161616"/><path d="M7.8 13.5 L9.6 9.8 L11.2 10.3 L10.8 14.2 L9 16.5 Z" fill="#c4c4c4"/><ellipse cx="14.2" cy="7.6" rx="3.1" ry="4.2" fill="#d8d8d8"/><path d="M10.6 6.5 Q10.8 1 14.6 0.8 Q18.6 1.2 18.2 6.5 L17.3 4.2 Q14.2 2.6 11.6 4.6 Z" fill="#111"/><path d="M14.2 13.6 L17 13.2 L18.2 26 L15.4 26 Z" fill="#ededed"/><rect x="14" y="13.2" width="4.2" height="1.8" fill="#111"/></svg></div>
<div class="a un nw" style="top:371.98999999999995px">qq123456<span style="letter-spacing:0;margin-left:3.5px">知府</span></div>
<div class="a tm nw" style="top:370.38999999999993px">13:02:58</div>
<div class="a tail" style="top:386.59px"></div>
<div class="a bub nw" style="top:382.78999999999996px">36</div>
<div class="a av" style="top:418.35999999999996px"><svg width="26" height="26" viewBox="0 0 26 26"><rect width="26" height="26" fill="#9c9c9c"/><rect width="26" height="10.2" fill="#5e5e5e"/><path d="M4 26 L4 21 Q5 17 8.5 16 L11.5 13 L17 12.5 Q20.5 13 21.5 17 L22.5 21 L26 22.5 L26 26 Z" fill="#121212"/><path d="M2.5 22 L6 15 L9 11.5 L11.5 12.5 L10.5 17.5 L6.5 22 Z" fill="#161616"/><path d="M7.8 13.5 L9.6 9.8 L11.2 10.3 L10.8 14.2 L9 16.5 Z" fill="#c4c4c4"/><ellipse cx="14.2" cy="7.6" rx="3.1" ry="4.2" fill="#d8d8d8"/><path d="M10.6 6.5 Q10.8 1 14.6 0.8 Q18.6 1.2 18.2 6.5 L17.3 4.2 Q14.2 2.6 11.6 4.6 Z" fill="#111"/><path d="M14.2 13.6 L17 13.2 L18.2 26 L15.4 26 Z" fill="#ededed"/><rect x="14" y="13.2" width="4.2" height="1.8" fill="#111"/></svg></div>
<div class="a un nw" style="top:416.35999999999996px">qq123456<span style="letter-spacing:0;margin-left:3.5px">知府</span></div>
<div class="a tm nw" style="top:414.75999999999993px">13:03:14</div>
<div class="a tail" style="top:430.96px"></div>
<div class="a bub nw" style="top:427.15999999999997px">9321</div>
<div class="a av" style="top:462.72999999999996px"><svg width="26" height="26" viewBox="0 0 26 26"><rect width="26" height="26" fill="#9c9c9c"/><rect width="26" height="10.2" fill="#5e5e5e"/><path d="M4 26 L4 21 Q5 17 8.5 16 L11.5 13 L17 12.5 Q20.5 13 21.5 17 L22.5 21 L26 22.5 L26 26 Z" fill="#121212"/><path d="M2.5 22 L6 15 L9 11.5 L11.5 12.5 L10.5 17.5 L6.5 22 Z" fill="#161616"/><path d="M7.8 13.5 L9.6 9.8 L11.2 10.3 L10.8 14.2 L9 16.5 Z" fill="#c4c4c4"/><ellipse cx="14.2" cy="7.6" rx="3.1" ry="4.2" fill="#d8d8d8"/><path d="M10.6 6.5 Q10.8 1 14.6 0.8 Q18.6 1.2 18.2 6.5 L17.3 4.2 Q14.2 2.6 11.6 4.6 Z" fill="#111"/><path d="M14.2 13.6 L17 13.2 L18.2 26 L15.4 26 Z" fill="#ededed"/><rect x="14" y="13.2" width="4.2" height="1.8" fill="#111"/></svg></div>
<div class="a un nw" style="top:460.72999999999996px">qq123456<span style="letter-spacing:0;margin-left:3.5px">知府</span></div>
<div class="a tm nw" style="top:459.12999999999994px">13:05:25</div>
<div class="a tail" style="top:475.33px"></div>
<div class="a bub nw" style="top:471.53px">663</div>
<div class="a tm" style="top:503.5px;left:106.5px;width:34px"></div>
<div class="a" style="left:0;top:506.5px;width:208px;height:11px;background:#fff"></div>
<div class="a" style="left:0;top:517.5px;width:208px;height:1px;background:#dedede"></div>
<svg class="a" style="left:6.5px;top:519px" width="17" height="17" viewBox="0 0 17 17"><circle cx="8.4" cy="8.1" r="7.9" fill="#f5c518"/><path d="M4.3 6.6 Q5.1 4.4 5.9 6.6 Z" fill="#4a2a10" stroke="#4a2a10" stroke-width=".6"/><path d="M10.9 6.6 Q11.7 4.4 12.5 6.6 Z" fill="#4a2a10" stroke="#4a2a10" stroke-width=".6"/><path d="M3.8 8.6 Q8.4 9.8 13 8.6 Q12.4 13.4 8.4 13.4 Q4.4 13.4 3.8 8.6 Z" fill="#4a1a0a"/><path d="M4.2 8.8 Q8.4 9.9 12.6 8.8 L12.4 9.7 Q8.4 10.6 4.4 9.7 Z" fill="#fff"/><path d="M6.2 12.6 Q8.4 11.2 10.6 12.6 Q8.4 13.6 6.2 12.6 Z" fill="#e04a3a"/></svg>
<div class="a" style="left:0;top:537px;width:208px;height:1px;background:#e2e2e2"></div>
<div class="a" style="left:2.5px;top:540.2px;width:171.5px;height:22px;border:1px solid #c3cad8;border-radius:3px;background:#fff"><div class="a nw" style="left:7px;top:5px;font-size:8.5px;line-height:10px;color:#9aa0ac">输入内容</div></div>
<svg class="a" style="left:167px;top:555px" width="6" height="6" viewBox="0 0 6 6"><path d="M5.5 0.5 L0.5 5.5 M5.5 3 L3 5.5" stroke="#888" stroke-width="0.7"/></svg>
<div class="a nw" style="left:178px;top:540.7px;width:40px;height:21.5px;border-radius:2px;background:#6a3cb8;color:#fff;font-size:8.5px;line-height:21.5px;padding-left:7px">发送</div>
<div class="a" style="left:201.8px;top:64px;width:10px;height:15px;border-radius:3px;background:#2196f8"><div class="a" style="left:2.2px;top:4px;width:6px;height:6px;border-radius:50%;border:1.6px solid #fff"></div></div>
<div class="a" style="left:0;top:564px;width:208px;height:2px;background:#d4d4de"></div>
</div>
<div class="a" style="left:0;top:564.5px;width:816px;height:1.5px;background:#cfd0dc"></div></div></body></html>
